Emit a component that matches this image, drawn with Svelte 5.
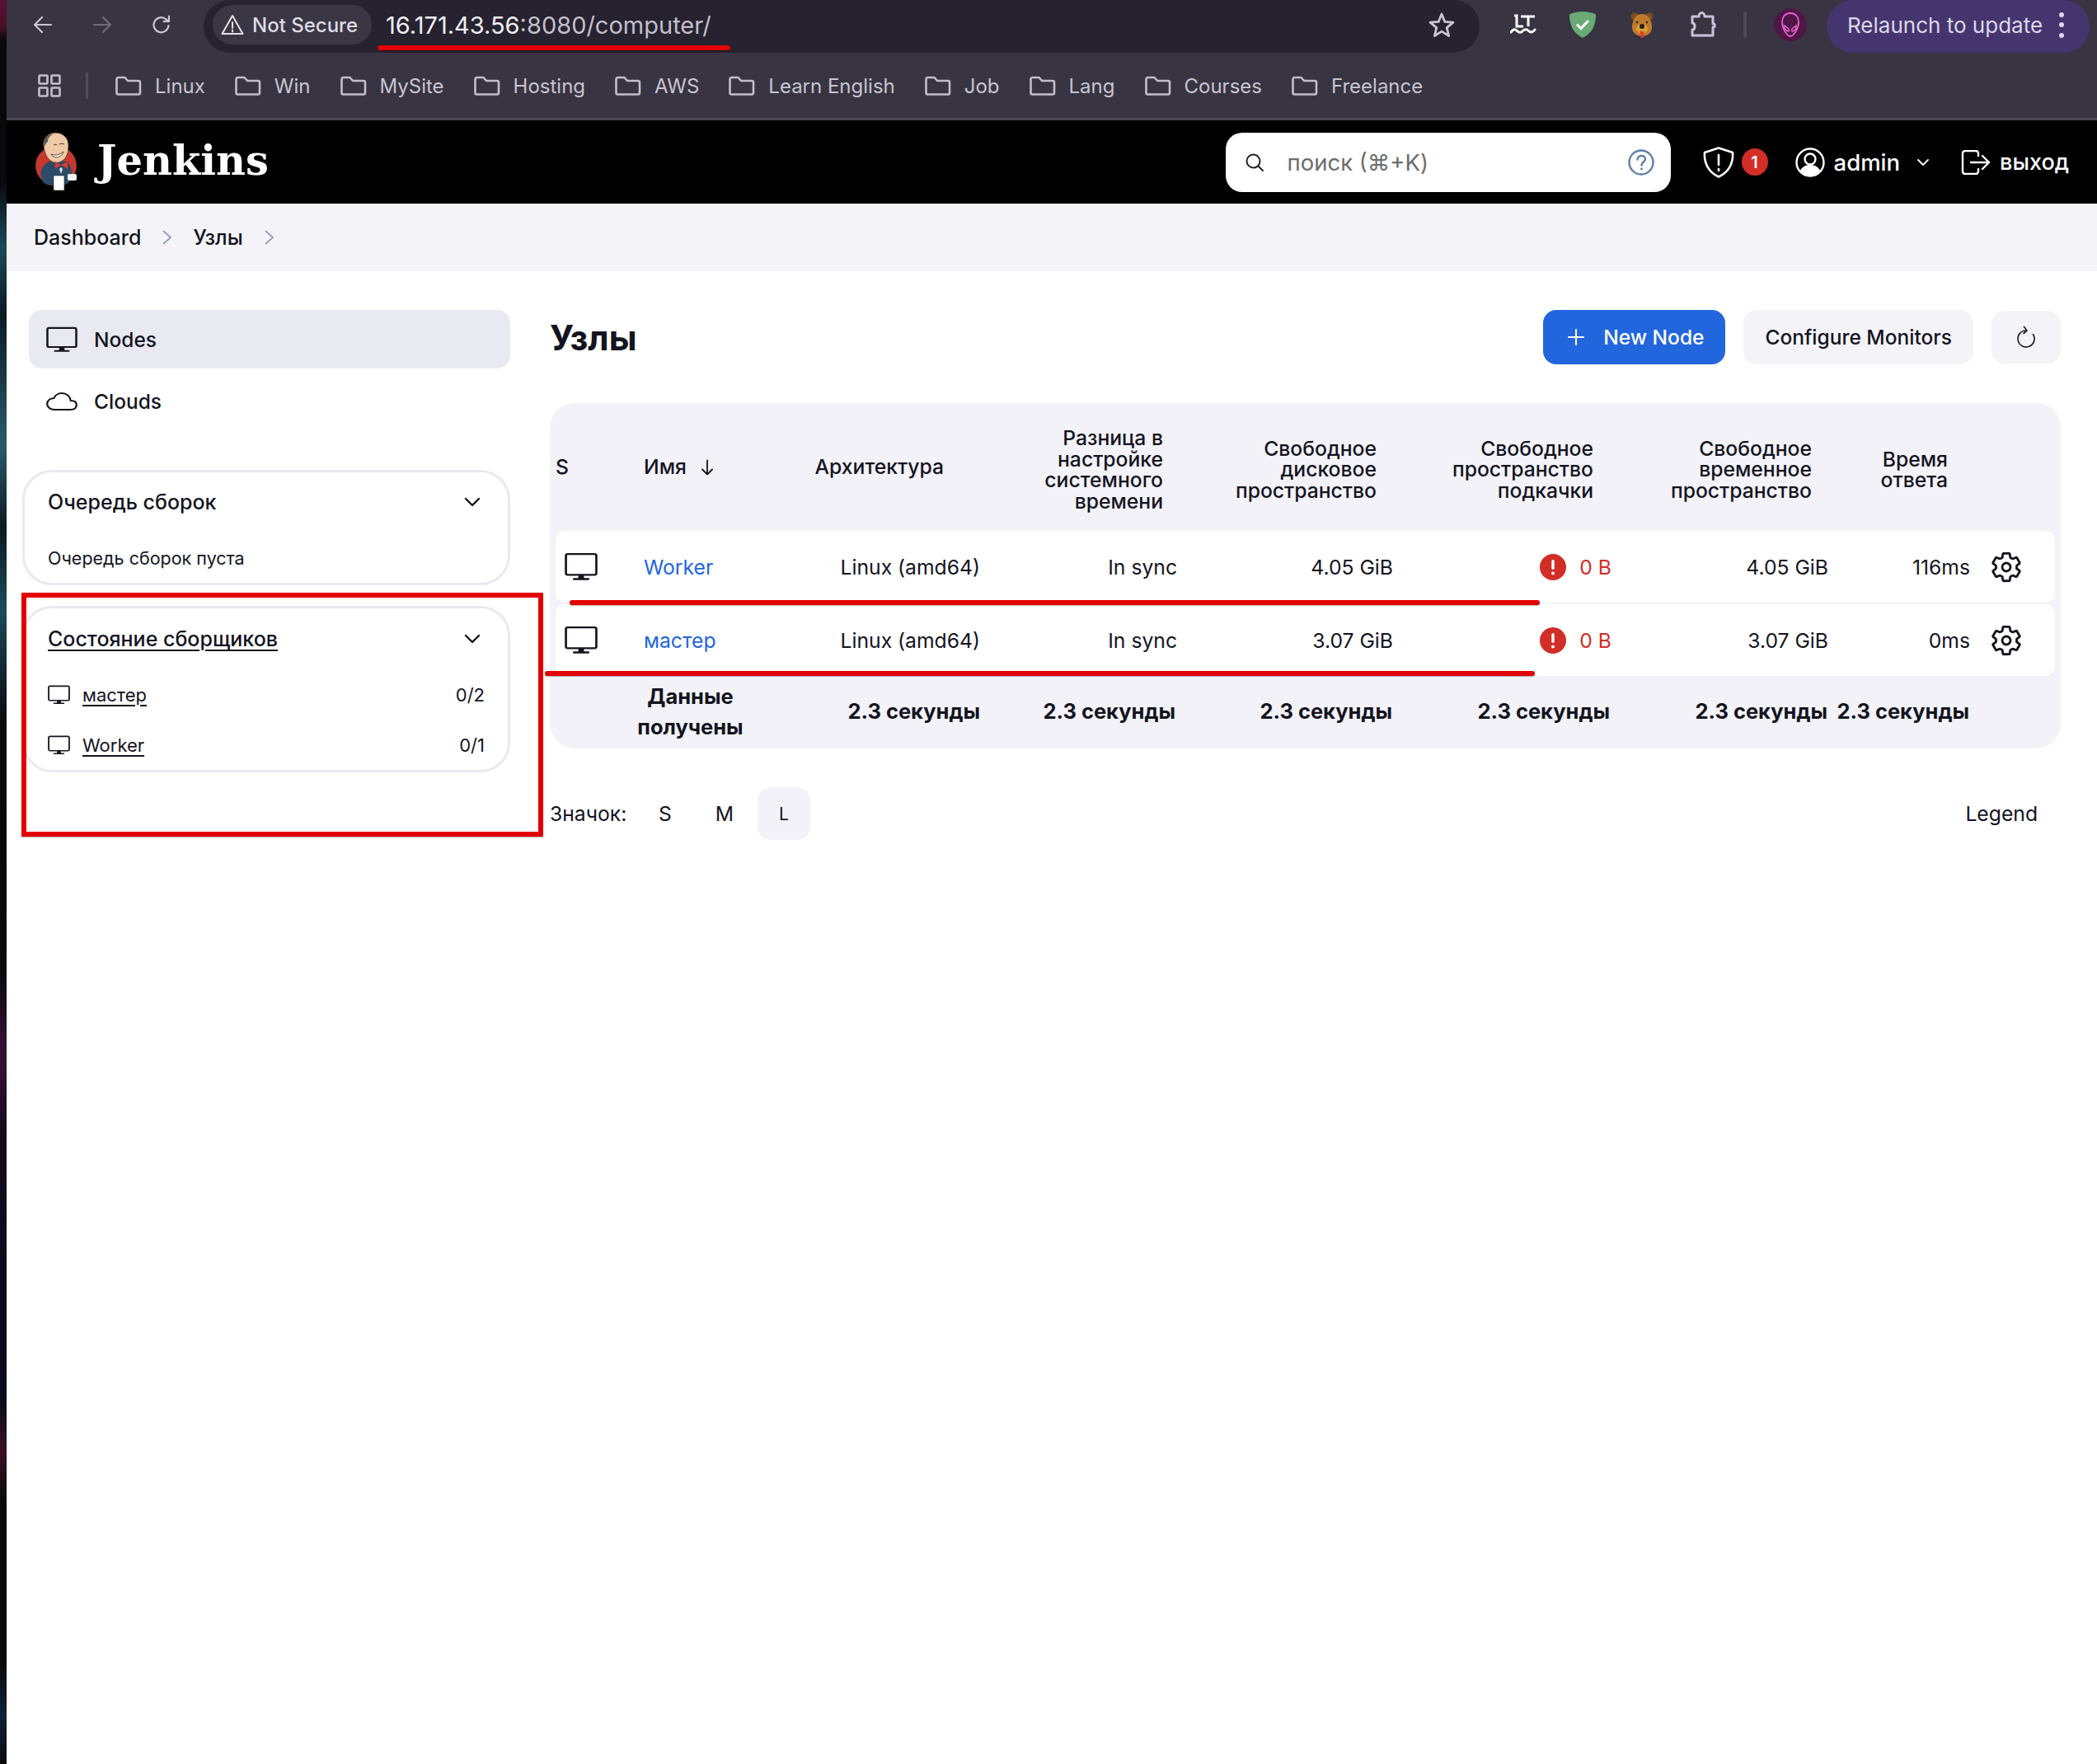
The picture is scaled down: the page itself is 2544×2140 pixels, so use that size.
<script>
  // Jenkins "Узлы" page inside a dark browser window
  const bookmarks = ["Linux", "Win", "MySite", "Hosting", "AWS", "Learn English", "Job", "Lang", "Courses", "Freelance"];
  const nodes = [
    { name: "Worker", disk: "4.05 GiB", tmp: "4.05 GiB", time: "116ms" },
    { name: "мастер", disk: "3.07 GiB", tmp: "3.07 GiB", time: "0ms" }
  ];
  const headers = [
    { text: "Разница в настройке системного времени", cls: "h-clock" },
    { text: "Свободное дисковое пространство", cls: "h-disk" },
    { text: "Свободное пространство подкачки", cls: "h-swap" },
    { text: "Свободное временное пространство", cls: "h-tmp" },
    { text: "Время ответа", cls: "h-time" }
  ];
  const executors = [
    { name: "мастер", count: "0/2" },
    { name: "Worker", count: "0/1" }
  ];
</script>

{#snippet monitor(cls)}
  <svg class={cls} viewBox="0 0 512 512" preserveAspectRatio="none" fill="none" stroke="currentColor" stroke-width="34" stroke-linejoin="round">
    <rect x="20" y="30" width="472" height="370" rx="30" />
    <path d="M304 470l-8-70h-80l-8 70z" fill="currentColor" stroke="none" />
    <path d="M368 475H144" stroke-linecap="round" />
  </svg>
{/snippet}

{#snippet chevron(cls)}
  <svg class={cls} viewBox="0 0 24 24" fill="none" stroke="currentColor" stroke-width="2.4" stroke-linecap="round" stroke-linejoin="round"><path d="M4 8l8 8 8-8" /></svg>
{/snippet}

{#snippet folder()}
  <svg class="folder" viewBox="0 0 32 24" fill="none" stroke="#c2bfca" stroke-width="2.6" stroke-linejoin="round"><path d="M1.5 4a2 2 0 012-2h8l3.5 4h13a2 2 0 012 2v12.5a2 2 0 01-2 2h-24.500a2 2 0 01-2-2z" /></svg>
{/snippet}

{#snippet errorIcon()}
  <svg class="err" viewBox="0 0 32 32"><circle cx="16" cy="16" r="16" fill="#d32d27" /><rect x="14.300" y="7" width="3.400" height="12" rx="1.700" fill="#fff" /><circle cx="16" cy="23.500" r="2" fill="#fff" /></svg>
{/snippet}

{#snippet gear()}
  <svg class="gear" viewBox="0 0 512 512" fill="none" stroke="currentColor" stroke-width="36" stroke-linecap="round" stroke-linejoin="round"><path d="M262.290 192.310a64 64 0 1057.400 57.400 64.130 64.130 0 00-57.400-57.400zM416.390 256a154.340 154.340 0 01-1.530 20.790l45.210 35.460a10.810 10.810 0 012.450 13.750l-42.770 74a10.810 10.810 0 01-13.140 4.590l-44.900-18.080a16.110 16.110 0 00-15.170 1.750A164.480 164.480 0 01325 400.800a15.940 15.940 0 00-8.820 12.140l-6.730 47.890a11.080 11.080 0 01-10.680 9.170h-85.540a11.110 11.110 0 01-10.690-8.870l-6.720-47.820a16.070 16.070 0 00-9-12.220 155.300 155.300 0 01-21.460-12.570 16 16 0 00-15.110-1.710l-44.890 18.070a10.810 10.810 0 01-13.140-4.580l-42.770-74a10.800 10.800 0 012.450-13.750l38.210-30a16.050 16.050 0 006-14.080c-.36-4.170-.58-8.330-.58-12.500s.21-8.270.58-12.350a16 16 0 00-6.070-13.940l-38.190-30A10.810 10.810 0 0149.480 186l42.770-74a10.810 10.810 0 0113.140-4.590l44.900 18.080a16.110 16.110 0 0015.170-1.750A164.480 164.480 0 01187 111.200a15.940 15.940 0 008.820-12.140l6.730-47.890A11.080 11.080 0 01213.230 42h85.540a11.110 11.110 0 0110.690 8.870l6.720 47.820a16.070 16.070 0 009 12.220 155.300 155.300 0 0121.460 12.570 16 16 0 0015.110 1.710l44.890-18.070a10.810 10.810 0 0113.140 4.580l42.770 74a10.800 10.800 0 01-2.450 13.750l-38.210 30a16.050 16.050 0 00-6.050 14.080c.33 4.140.55 8.300.55 12.470z" /></svg>
{/snippet}

<div class="window">
  <div class="edge"></div>
  <div class="main">
    <div class="chrome">
      <div class="toolbar">
        <svg class="nav back" viewBox="0 0 24 24" fill="none" stroke="#c9c6d0" stroke-width="2.200" stroke-linecap="round" stroke-linejoin="round"><path d="M22 12H3M11 3l-9 9 9 9" /></svg>
        <svg class="nav fwd" viewBox="0 0 24 24" fill="none" stroke="#6f6c79" stroke-width="2.200" stroke-linecap="round" stroke-linejoin="round"><path d="M2 12h19M13 3l9 9-9 9" /></svg>
        <svg class="nav reload" viewBox="0 0 24 24" fill="none" stroke="#c9c6d0" stroke-width="2.200" stroke-linecap="round" stroke-linejoin="round"><path d="M20.500 13a9 9 0 11-3-7.500L21 8M21 1.500V8h-6.500" /></svg>
        <div class="omnibox">
          <div class="secure">
            <svg class="warn" viewBox="0 0 28 26" fill="none" stroke="#e4e1ea" stroke-width="2" stroke-linejoin="round"><path d="M14 2L26.500 24H1.500z" /><path d="M14 10v7M14 19.500v2" stroke-linecap="round" /></svg>
            <span>Not Secure</span>
          </div>
          <div class="url"><span class="host">16.171.43.56</span><span class="path">:8080/computer/</span></div>
          <svg class="star" viewBox="0 0 32 32" fill="none" stroke="#c9c6d0" stroke-width="2.800" stroke-linejoin="round"><path d="M16 3l3.800 9.400 10.200.7-7.800 6.500 2.500 9.900-8.700-5.400-8.700 5.400 2.500-9.900L2 13.100l10.200-.7z" /></svg>
        </div>
        <div class="extensions">
          <svg class="ext lt" viewBox="0 0 32 26" fill="none" stroke="#fff" stroke-width="3"><path d="M5 2h3v13h8M13 3h17M22 3v12" /><path d="M1 22c3-4 5-4 7.500-1.500s4.500 2.500 7 0 4.500-2.500 7 0 5 2 7.500-1.500" stroke-linecap="round" /></svg>
          <svg class="ext guard" viewBox="0 0 32 32"><path d="M16 0C10 0 4 1.500 0 3.500 0 16 4 26 16 32 28 26 32 16 32 3.500 28 1.500 22 0 16 0z" fill="#68ab74" /><path d="M9 15.500l5 5 9-9.500" fill="none" stroke="#fff" stroke-width="3" /></svg>
          <svg class="ext bear" viewBox="0 0 28 32"><circle cx="5" cy="6" r="4.500" fill="#7d4f22" /><circle cx="23" cy="6" r="4.500" fill="#7d4f22" /><path d="M14 3c7 0 11 6 12 14 1 8-5 13-12 13S1 25 2 17C3 9 7 3 14 3z" fill="#bf7a2c" /><ellipse cx="14" cy="21" rx="7" ry="6" fill="#dd9c34" /><circle cx="14" cy="18" r="3" fill="#222" /><circle cx="8" cy="13" r="1.200" fill="#222" /><circle cx="20" cy="13" r="1.200" fill="#222" /><path d="M11.500 24h5l-.5 6a2 2 0 01-4 0z" fill="#d8402f" /></svg>
          <svg class="ext puzzle" viewBox="0 0 32 32" fill="none" stroke="#c8c3da" stroke-width="3" stroke-linejoin="round"><path d="M3 6h8c0-6 7-6 7 0h10v9c3-1 3 5 0 4v10H3v-7c4 0 4-8 0-8z" /></svg>
          <div class="sep"></div>
          <svg class="ext alien" viewBox="0 0 40 40"><circle cx="20" cy="20" r="20" fill="#4d1746" /><path d="M20 6c7 0 10 5 10 11 0 7-6 17-10 17S10 24 10 17c0-6 3-11 10-11z" fill="none" stroke="#ef5fd0" stroke-width="1.800" /><path d="M13 21l5 4v3c-3 0-5-3-5-7zM27 21l-5 4v3c3 0 5-3 5-7z" fill="none" stroke="#ef5fd0" stroke-width="1.500" /></svg>
          <div class="relaunch">
            <span>Relaunch to update</span>
            <div class="dots"><i></i><i></i><i></i></div>
          </div>
        </div>
      </div>
      <div class="bookmarks">
        <svg class="apps" viewBox="0 0 28 28" fill="none" stroke="#c2bfca" stroke-width="2.600"><rect x="1.500" y="1.500" width="10" height="10" rx="1" /><rect x="16.500" y="1.500" width="10" height="10" rx="1" /><rect x="1.500" y="16.500" width="10" height="10" rx="1" /><rect x="16.500" y="16.500" width="10" height="10" rx="1" /></svg>
        <div class="bm-sep"></div>
        {#each bookmarks as b}
          <div class="bookmark">
            {@render folder()}
            <span>{b}</span>
          </div>
        {/each}
      </div>
    </div>

    <header class="jenkins">
      <svg class="butler" viewBox="0 0 53 72">
        <ellipse cx="26" cy="40" rx="25" ry="24" fill="#c9382c" stroke="#3a2a26" stroke-width="1" />
        <path d="M7 48c3-10 10-14 18-15l14 2c5 4 6 10 6 16l-3 9c-6 6-26 6-32 0z" fill="#2d4a68" />
        <path d="M11 14C11 5 18 0 25 0c9 0 16 6 16 15 0 7-1 12-4 16-4 5-11 7-16 4-6-3-10-12-10-21z" fill="#f0c9a6" stroke="#4a3324" stroke-width=".8" />
        <path d="M11 18C8 9 14 2 24 1c-5 2-8 5-8 10-2 1-3 4-5 7z" fill="#5c5855" />
        <path d="M20 26c5 2 10 1 15-3-1 6-11 10-15 3z" fill="#fff" stroke="#4a3324" stroke-width=".9" />
        <path d="M30 14c2-1 4-1 6 0M23 15c1-1 3-1 4 0" fill="none" stroke="#4a3324" stroke-width="1" />
        <path d="M32 39l-7-4v9zM32 39l8-4v9z" fill="#d93a2e" />
        <path d="M30 44l2-2 2 2-2 6z" fill="#dfe6ee" />
        <rect x="23" y="52" width="13" height="18" rx="1" fill="#fff" stroke="#2a2a2a" stroke-width=".6" />
        <rect x="40" y="50" width="11" height="8" rx="2" fill="#f2f2f2" />
      </svg>
      <span class="brand">Jenkins</span>
      <div class="search">
        <svg class="mag" viewBox="0 0 24 24" fill="none" stroke="#222" stroke-width="2"><circle cx="10.500" cy="10.500" r="8" /><path d="M16.500 16.500L22 22" stroke-linecap="round" /></svg>
        <span class="placeholder">поиск (⌘+K)</span>
        <svg class="help" viewBox="0 0 32 32" fill="none" stroke="#5d7fa8" stroke-width="2.400"><circle cx="16" cy="16" r="14.500" /><path d="M11.500 12.500c0-6 9.500-6 9.500-.5 0 3.500-4.500 3.500-4.500 7.500" stroke-linecap="round" /><circle cx="16.500" cy="24" r="1.400" fill="#5d7fa8" stroke="none" /></svg>
      </div>
      <svg class="shield" viewBox="0 0 38 38" fill="none" stroke="#fff" stroke-width="2.600" stroke-linejoin="round"><path d="M19 1.500L36 7c1 13-5 24-17 29.500C7 31 1 20 2 7z" /><path d="M19 10v12M19 27v2" stroke-linecap="round" /></svg>
      <span class="badge">1</span>
      <svg class="user" viewBox="0 0 36 36"><circle cx="18" cy="18" r="16.500" fill="none" stroke="#fff" stroke-width="2.400" /><circle cx="18" cy="14" r="6.500" fill="none" stroke="#fff" stroke-width="2.400" /><path d="M6 28c3-6 8-7 12-7s9 1 12 7c-7 8-17 8-24 0z" fill="#fff" /></svg>
      <span class="admin">admin</span>
      {@render chevron("admin-chev")}
      <svg class="logout" viewBox="0 0 36 30" fill="none" stroke="#fff" stroke-width="2.400" stroke-linecap="round" stroke-linejoin="round"><path d="M21 7V4a3 3 0 00-3-3H5a3 3 0 00-3 3v22a3 3 0 003 3h13a3 3 0 003-3v-3" /><path d="M12 15h22M26 7l8 8-8 8" /></svg>
      <span class="exit">выход</span>
    </header>

    <nav class="crumbs">
      <span>Dashboard</span>
      <svg class="sep-chev" viewBox="0 0 12 18" fill="none" stroke="#8f9fb8" stroke-width="1.800" stroke-linecap="round" stroke-linejoin="round"><path d="M1.500 1.500L10 9l-8.500 7.500" /></svg>
      <span>Узлы</span>
      <svg class="sep-chev" viewBox="0 0 12 18" fill="none" stroke="#8f9fb8" stroke-width="1.800" stroke-linecap="round" stroke-linejoin="round"><path d="M1.500 1.500L10 9l-8.500 7.500" /></svg>
    </nav>

    <div class="page">
      <aside class="side">
        <div class="tasks">
          <div class="task active">
            {@render monitor("task-icon")}
            <span>Nodes</span>
          </div>
          <div class="task">
            <svg class="task-icon" viewBox="0 0 512 512" preserveAspectRatio="none" fill="none" stroke="currentColor" stroke-width="30" stroke-linejoin="round"><path d="M400 240c-8.890-89.540-71-144-144-144-69 0-113.440 48.200-128 96-60 6-112 43.590-112 112 0 66 54 112 120 112h260c55 0 100-27.440 100-96 0-67.720-53-79-96-80z" /></svg>
            <span>Clouds</span>
          </div>
        </div>

        <section class="card queue">
          <div class="card-head">
            <span>Очередь сборок</span>
            {@render chevron("card-chev")}
          </div>
          <p class="empty">Очередь сборок пуста</p>
        </section>

        <section class="card status">
          <div class="card-head">
            <span class="linked">Состояние сборщиков</span>
            {@render chevron("card-chev")}
          </div>
          {#each executors as e}
            <div class="executor">
              {@render monitor("exec-icon")}
              <span class="linked">{e.name}</span>
              <span class="count">{e.count}</span>
            </div>
          {/each}
        </section>
      </aside>

      <main class="content">
        <div class="title-row">
          <h1>Узлы</h1>
          <button class="btn primary">
            <svg class="plus" viewBox="0 0 20 20" fill="none" stroke="#fff" stroke-width="2" stroke-linecap="round"><path d="M10 1v18M1 10h18" /></svg>
            New Node
          </button>
          <button class="btn">Configure Monitors</button>
          <button class="btn refresh" aria-label="Refresh">
            <svg class="reload-ic" viewBox="0 0 24 28" fill="none" stroke="#222" stroke-width="1.700" stroke-linecap="round" stroke-linejoin="round"><path d="M12 6a10 10 0 108.500 4.700M9.500 1.500L13 6l-4 3.500" /></svg>
          </button>
        </div>

        <div class="table-wrap">
          <table>
            <colgroup>
              <col class="c-s" /><col class="c-name" /><col class="c-arch" /><col class="c-clock" /><col class="c-disk" /><col class="c-swap" /><col class="c-tmp" /><col class="c-time" /><col class="c-gear" />
            </colgroup>
            <thead>
              <tr>
                <th class="th-s">S</th>
                <th class="th-name">Имя
                  <svg class="sort" viewBox="0 0 16 20" fill="none" stroke="#14141f" stroke-width="1.800" stroke-linecap="round" stroke-linejoin="round"><path d="M8 1.500v17M2 12.500l6 6 6-6" /></svg>
                </th>
                <th class="h-arch">Архитектура</th>
                {#each headers as h}
                  <th class={h.cls}>{h.text}</th>
                {/each}
                <th></th>
              </tr>
            </thead>
            <tbody>
              {#each nodes as n}
                <tr>
                  <td class="td-icon">{@render monitor("row-icon")}</td>
                  <td class="td-name"><span class="node-link">{n.name}</span></td>
                  <td>Linux (amd64)</td>
                  <td>In sync</td>
                  <td>{n.disk}</td>
                  <td class="td-swap"><span class="swap">{@render errorIcon()}<span>0 B</span></span></td>
                  <td>{n.tmp}</td>
                  <td>{n.time}</td>
                  <td class="td-gear">{@render gear()}</td>
                </tr>
              {/each}
            </tbody>
            <tfoot>
              <tr>
                <td></td>
                <td class="f-label">Данные получены</td>
                <td class="f-1">2.3 секунды</td>
                <td class="f-2">2.3 секунды</td>
                <td class="f-3">2.3 секунды</td>
                <td class="f-4">2.3 секунды</td>
                <td class="f-5">2.3 секунды</td>
                <td class="f-6">2.3 секунды</td>
                <td></td>
              </tr>
            </tfoot>
          </table>
        </div>

        <div class="icon-row">
          <span class="icon-label">Значок:</span>
          <span class="size s">S</span>
          <span class="size m">M</span>
          <span class="size l">L</span>
          <span class="legend">Legend</span>
        </div>
      </main>
    </div>
  </div>

  <!-- red annotations drawn on top of the screenshot -->
  <div class="mark url-line"></div>
  <div class="mark row1-line"></div>
  <div class="mark row2-line"></div>
  <div class="mark box"></div>
</div>

<style>
  :global(body) { margin: 0; background: #fff; }
  .window { position: relative; display: flex; width: 2544px; height: 2140px; overflow: hidden; font-family: Inter, "Noto Sans", sans-serif; color: #14141f; }
  .edge { width: 8px; flex: none; background: linear-gradient(180deg, #5a1230 0, #4a1028 30px, #08090d 50px, #08090d 220px, #1c4a5a 300px, #0a1a24 380px, #2a5a6a 540px, #0c1a22 640px, #1c4a5a 740px, #08090d 880px, #0a0a10 1180px, #3a1038 1280px, #14081a 1380px, #0a0c18 1700px, #3a1024 1760px, #0a0a10 1820px, #0a0a10 2020px, #0e2238 2080px, #0a0a10 2140px); }
  .main { flex: 1; min-width: 0; display: flex; flex-direction: column; }

  /* browser chrome */
  .chrome { background: #383442; border-bottom: 3px solid #4a4752; color: #c8c5d0; }
  .toolbar { height: 64px; display: flex; align-items: center; }
  .nav { width: 24px; height: 24px; flex: none; margin-bottom: 4px; }
  .back { margin-left: 32px; }
  .fwd { margin-left: 48px; }
  .reload { margin-left: 48px; }
  .omnibox { margin-left: 39px; width: 1548px; height: 64px; box-sizing: border-box; border-radius: 32px; background: #26222f; display: flex; align-items: center; padding: 0 30px 4px 11px; }
  .secure { height: 48px; padding: 0 17px 0 10px; background: #3a3644; border-radius: 24px; display: flex; align-items: center; gap: 10px; color: #dedbe5; font-size: 24px; font-weight: 500; }
  .warn { width: 28px; height: 26px; }
  .url { margin-left: 17px; font-size: 29px; white-space: nowrap; }
  .host { color: #f1eff5; }
  .path { color: #c3bfcc; }
  .star { width: 32px; height: 32px; margin-left: auto; }
  .extensions { display: flex; align-items: center; margin-left: 37px; flex: 1; }
  .ext { flex: none; margin-bottom: 4px; }
  .lt { width: 32px; height: 26px; }
  .guard { width: 32px; height: 32px; margin-left: 40px; }
  .bear { width: 28px; height: 32px; margin-left: 42px; }
  .puzzle { width: 32px; height: 32px; margin-left: 44px; }
  .sep { width: 4px; height: 32px; margin: 0 0 4px 33px; border-radius: 2px; background: #4c4957; }
  .alien { width: 40px; height: 40px; margin-left: 33px; }
  .relaunch { width: 319px; height: 64px; margin-left: 24px; box-sizing: border-box; background: #45356e; border-radius: 32px; display: flex; align-items: center; padding: 0 0 4px 25px; color: #dcd7ec; font-size: 26px; white-space: nowrap; }
  .dots { display: flex; flex-direction: column; gap: 6.500px; margin-left: 20px; }
  .dots i { width: 6px; height: 6px; border-radius: 50%; background: #dcd7ec; }
  .bookmarks { height: 76px; display: flex; align-items: center; padding: 2px 0 1px 38px; box-sizing: content-box; height: 76px; }
  .apps { width: 28px; height: 28px; flex: none; }
  .bm-sep { width: 3px; height: 32px; margin: 0 33px 0 30px; background: #4f4c59; }
  .bookmark { display: flex; align-items: center; gap: 16px; margin-right: 36px; font-size: 24px; white-space: nowrap; }
  .folder { width: 32px; height: 24px; flex: none; }

  /* jenkins header */
  .jenkins { height: 101px; background: #000; color: #fff; display: flex; align-items: center; flex: none; padding-right: 34px; }
  .butler { width: 53px; height: 72px; margin-left: 34px; flex: none; }
  .brand { margin: 0 0 4px 23px; font-family: "DejaVu Serif", serif; font-weight: 700; font-size: 49.500px; flex: none; }
  .search { width: 540px; height: 72px; flex: none; box-sizing: border-box; margin-left: auto; background: #fff; border-radius: 20px; display: flex; align-items: center; padding: 0 20px 0 23px; color: #6d6d6d; }
  .mag { width: 24px; height: 24px; }
  .placeholder { margin-left: 28px; font-size: 27.500px; }
  .help { width: 32px; height: 32px; margin-left: auto; }
  .shield { width: 38px; height: 38px; margin-left: 39px; flex: none; }
  .badge { width: 32px; height: 33px; margin-left: 9px; flex: none; border-radius: 50%; background: #d32d27; font-size: 20px; font-weight: 600; display: flex; align-items: center; justify-content: center; }
  .user { width: 36px; height: 36px; margin-left: 33px; flex: none; }
  .admin { margin-left: 11px; font-size: 27.500px; font-weight: 500; }
  .jenkins :global(.admin-chev) { width: 18px; height: 18px; margin-left: 19px; flex: none; color: #fff; }
  .logout { width: 36px; height: 30px; margin-left: 37px; flex: none; }
  .exit { margin-left: 11px; font-size: 27px; font-weight: 500; }

  /* breadcrumb */
  .crumbs { height: 82px; flex: none; background: #f4f4f8; display: flex; align-items: center; padding-left: 33px; font-size: 25px; font-weight: 500; }
  .sep-chev { width: 12px; height: 18px; margin: 0 25px 0 26px; flex: none; }

  .page { display: flex; padding-top: 47px; }

  /* sidebar */
  .side { width: 592px; flex: none; margin: 0 48px 0 19px; font-weight: 500; }
  .tasks { display: flex; flex-direction: column; gap: 4px; margin-left: 8px; }
  .task { height: 71px; border-radius: 16px; display: flex; align-items: center; padding-left: 21px; font-size: 24.500px; }
  .task.active { background: #e9e9f2; }
  :global(.task-icon) { width: 38px; height: 32px; margin-right: 20px; flex: none; }
  .card { box-sizing: border-box; border: 3px solid #e9e9f2; border-radius: 36px; padding: 0 28px; }
  .queue { height: 140px; margin-top: 48px; }
  .status { height: 202px; margin-top: 25px; }
  .card-head { height: 72px; display: flex; align-items: center; justify-content: space-between; font-size: 25px; }
  .status .card-head { height: 74px; }
  :global(.card-chev) { width: 24px; height: 24px; margin-right: 3px; flex: none; }
  .linked { text-decoration: underline; text-underline-offset: 4px; text-decoration-thickness: 2px; }
  .empty { margin: 19px 0 0; font-size: 21.500px; font-weight: 400; }
  .executor { height: 61px; display: flex; align-items: center; font-size: 22px; font-weight: 400; }
  :global(.exec-icon) { width: 27px; height: 24px; margin-right: 15px; flex: none; }
  .count { margin-left: auto; }

  /* content */
  .content { flex: 1; min-width: 0; margin-right: 44px; }
  .title-row { height: 66px; display: flex; align-items: center; gap: 22px; }
  h1 { margin: 0 auto 0 0; font-size: 42px; font-weight: 700; }
  .btn { height: 66px; box-sizing: border-box; border: none; border-radius: 16px; background: #f4f4f8; color: #14141f; font: 500 24.500px Inter, sans-serif; padding: 0 26px; display: flex; align-items: center; }
  .btn.primary { background: #2266dd; color: #fff; padding: 0 26px 0 30px; }
  .plus { width: 20px; height: 20px; margin-right: 23px; }
  .refresh { width: 84px; height: 64px; padding: 0; justify-content: center; }
  .reload-ic { width: 24px; height: 28px; }

  .table-wrap { margin-top: 47px; background: #f2f2f8; border-radius: 30px; padding: 0 7px; }
  table { width: 1819px; table-layout: fixed; border-collapse: separate; border-spacing: 0; font-size: 24.700px; }
  .c-s { width: 96px; }
  .c-name { width: 135px; }
  .c-arch { width: 284px; }
  .c-clock { width: 239px; }
  .c-disk { width: 262px; }
  .c-swap { width: 265px; }
  .c-tmp { width: 263px; }
  .c-time { width: 172px; }
  .c-gear { width: 103px; }
  thead tr { height: 155px; }
  th { font-weight: 500; line-height: 25.500px; text-align: right; padding: 0; vertical-align: middle; }
  .th-s, .th-name { text-align: left; }
  .th-name { padding-left: 11px; white-space: nowrap; }
  .sort { width: 16px; height: 20px; margin-left: 10px; vertical-align: -2px; }
  .h-arch { padding-right: 44px; }
  .h-clock { padding: 7px 17px 0 30px; }
  .h-disk { padding: 7px 20px 0 40px; }
  .h-swap { padding: 7px 22px 0 30px; }
  .h-tmp { padding: 7px 20px 0 30px; }
  .h-time { padding: 7px 27px 0 50px; }
  tbody tr { height: 87px; }
  tbody tr:first-child { height: 89px; }
  tbody td { background: #fff; text-align: right; padding: 0; }
  tbody tr:first-child td { border-bottom: 2px solid #f2f2f8; }
  tbody td:first-child { border-radius: 12px 0 0 12px; }
  tbody td:last-child { border-radius: 0 12px 12px 0; }
  tbody td.td-icon { text-align: left; }
  :global(.row-icon) { width: 40px; height: 35px; display: block; margin-left: 11px; }
  tbody td.td-name { text-align: left; padding-left: 11px; overflow: visible; }
  .node-link { color: #2266dd; }
  .swap { display: inline-flex; align-items: center; gap: 16px; color: #d32d27; vertical-align: middle; }
  .err { width: 32px; height: 32px; flex: none; }
  .gear { width: 40px; height: 40px; display: block; margin-left: 24px; }
  tfoot tr { height: 88px; }
  tfoot td { font-weight: 700; font-size: 25.500px; text-align: right; padding: 0 0 3px; line-height: 37px; white-space: nowrap; }
  tfoot .f-label { text-align: center; white-space: normal; }
  tfoot .f-2 { padding-right: 2px; }
  tfoot .f-3 { padding-right: 1px; }
  tfoot .f-4 { padding-right: 2px; }
  tfoot .f-5 { padding-right: 1px; }
  tfoot .f-6 { padding-right: 1px; }

  .icon-row { margin-top: 47px; height: 64px; display: flex; align-items: center; font-size: 24.700px; }
  .icon-label { width: 108px; }
  .size { width: 64px; height: 64px; display: flex; align-items: center; justify-content: center; border-radius: 16px; margin-left: 8px; }
  .size.s { margin-left: 0; }
  .size.l { background: #f2f2f8; font-size: 21px; }
  .legend { margin-left: auto; margin-right: 28px; }

  /* annotations */
  .mark { position: absolute; background: #e30000; border-radius: 3px; box-shadow: 0 1px 1px rgba(0, 0, 0, 0.3); }
  .url-line { left: 458px; top: 55px; width: 428px; height: 6px; }
  .row1-line { left: 691px; top: 728px; width: 1177px; height: 6px; }
  .row2-line { left: 661px; top: 814px; width: 1201px; height: 6px; }
  .box { left: 26px; top: 719px; width: 633px; height: 296px; box-sizing: border-box; background: none; border: 6px solid #e30000; border-radius: 1px; }
</style>
